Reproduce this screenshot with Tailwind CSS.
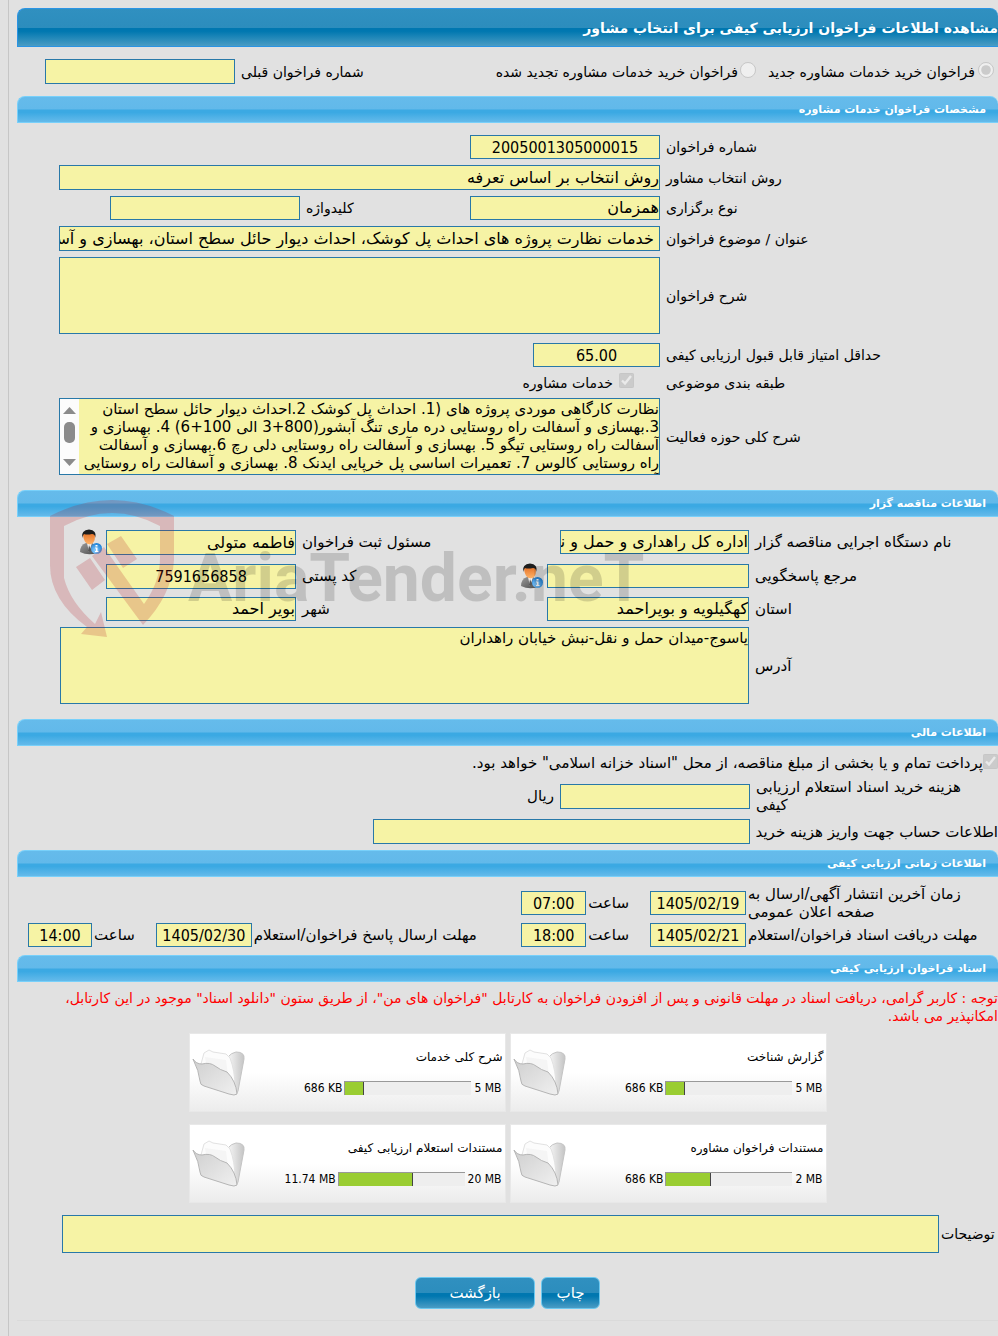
<!DOCTYPE html>
<html lang="fa" dir="rtl">
<head>
  <meta charset="UTF-8" />
  <title>مشاهده اطلاعات فراخوان ارزیابی کیفی</title>
  <meta name="viewport" content="width=device-width, initial-scale=1.0" />
  <script src="https://cdn.jsdelivr.net/npm/@tailwindcss/browser@4"></script>
  <style>
    body {
      font-family: 'DejaVu Sans', sans-serif;
    }
    .num {
      font-family: 'DejaVu Sans Condensed', sans-serif;
    }
    .title-bar {
      background: linear-gradient(#3090c0 0%, #2c8dbd 50%, #0077b0 51%, #0077b0 60%, #4a9cc4 100%);
    }
    .section-bar {
      background: linear-gradient(#65bbeb 0%, #62b9ea 48%, #3ba9e3 52%, #3ba9e3 62%, #64baea 100%);
    }
  </style>
</head>
<body class="bg-[#e1e1e1] text-black text-[15px] leading-[18px] overflow-x-hidden">
  <!-- Shared icons -->
  <svg class="absolute size-0">
    <defs>
      <linearGradient id="suit" x1="0" y1="0" x2="1" y2="1"><stop offset="0" stop-color="#9a9a9a" /><stop offset="1" stop-color="#4a4a4a" /></linearGradient>
      <linearGradient id="face" x1="0" y1="0" x2="0" y2="1"><stop offset="0" stop-color="#e0661c" /><stop offset="1" stop-color="#ffb469" /></linearGradient>
      <radialGradient id="info" cx="0.4" cy="0.7" r="0.7"><stop offset="0" stop-color="#8fd0ff" /><stop offset="1" stop-color="#1b7fd6" /></radialGradient>
      <linearGradient id="front" x1="0" y1="0" x2="1" y2="1"><stop offset="0" stop-color="#cfcfcf" /><stop offset="1" stop-color="#f0f0f0" /></linearGradient>
      <linearGradient id="back" x1="0" y1="0" x2="1" y2="0"><stop offset="0" stop-color="#f7f7f7" /><stop offset="1" stop-color="#c4c4c4" /></linearGradient>
    </defs>
    <symbol id="icon-user" viewBox="0 0 24 26">
      <path d="M1 23Q1 16 7 14L13 14Q18 16 18 24Q9 27 1 23Z" fill="url(#suit)" />
      <path d="M8 14L10 23L13 14Z" fill="#f4f4f4" />
      <path d="M10 16L9 22L11 23L12 21Z" fill="#555" />
      <path d="M4 6Q4 2 10 2Q16 2 16 7Q16 15 10.500 15.500Q5 15 4 6Z" fill="url(#face)" />
      <path d="M3 9Q2 1 10 0.500Q18 1 16.500 9Q16 5 13 5Q8 6 5 5Q4 6 3 9Z" fill="#1d1d1d" />
      <circle cx="17.500" cy="19.500" r="5.500" fill="url(#info)" />
      <path d="M16.500 16H18.500V17.500H16.500ZM16 18.500H18.500V22H19.500V23H16V22H17V19.500H16Z" fill="#fff" />
    </symbol>
    <symbol id="icon-folder" viewBox="0 0 54 48">
      <path d="M36 8Q39 4 44 3Q53 3 52 10L46 42Q45 46 42 45Z" fill="url(#back)" stroke="#c4c4c4" />
      <path d="M9 15L12 4L17 1L21 3L34 5L38 9Q43 22 43 38L12 28Z" fill="#fcfcfc" stroke="#e2e2e2" />
      <path d="M13 8L34 11L37 34L16 26Z" fill="#f5f5f5" />
      <path d="M1 10Q4 15 10 15Q18 13 23 17Q28 21 35 23Q44 32 45 45Q43 47 37 45L12 37Q8 36 8 32Q7 22 1 10Z" fill="url(#front)" stroke="#b5b5b5" />
    </symbol>
  </svg>

  <div class="relative ml-2 pl-2 pt-2 min-h-screen border-l border-[#c6c6c6]">
    <header class="title-bar h-[39px] flex items-center rounded-t-lg border border-[#2a94e4] border-r-0">
      <h1 class="text-sm font-bold text-white">مشاهده اطلاعات فراخوان ارزیابی کیفی برای انتخاب مشاور</h1>
    </header>

    <div class="flex items-center mt-3 mb-3 pr-1 text-sm leading-[18px]">
      <input type="radio" id="call-new" name="call-type" checked disabled class="size-4 mb-1" />
      <label for="call-new" class="mr-[3px] ml-3">فراخوان خرید خدمات مشاوره جدید</label>
      <input type="radio" id="call-renewed" name="call-type" disabled class="size-4 mb-1" />
      <label for="call-renewed" class="mr-[2px]">فراخوان خرید خدمات مشاوره تجدید شده</label>
      <label for="prev-number" class="mr-auto ml-[6px]">شماره فراخوان قبلی</label>
      <input id="prev-number" readonly class="w-[190px] h-[25px] ml-7 bg-[#f6f3a5] border border-[#2878a8]" />
    </div>

    <!-- Call details -->
    <h2 class="section-bar h-[27px] flex items-center pr-3 text-[11px] font-bold text-white rounded-t-lg border border-[#78d0fa] border-r-0">مشخصات فراخوان خدمات مشاوره</h2>
    <div class="pt-3 pb-[15px] pl-[42px] flex flex-col gap-[6px] text-sm leading-[18px]">
      <div class="flex items-center gap-[6px]">
        <label for="call-number" class="w-[332px] shrink-0 text-left">شماره فراخوان</label>
        <input id="call-number" readonly value="2005001305000015" class="num w-[190px] h-6 pt-px text-base text-center bg-[#f6f3a5] border border-[#2878a8]" />
      </div>
      <div class="flex items-center gap-[6px]">
        <label for="method" class="w-[332px] shrink-0 text-left">روش انتخاب مشاور</label>
        <input id="method" readonly value="روش انتخاب بر اساس تعرفه" class="flex-1 min-w-0 h-[25px] text-base bg-[#f6f3a5] border border-[#2878a8]" />
      </div>
      <div class="flex items-center gap-[6px]">
        <label for="holding" class="w-[332px] shrink-0 text-left">نوع برگزاری</label>
        <input id="holding" readonly value="همزمان" class="w-[190px] h-6 text-base bg-[#f6f3a5] border border-[#2878a8]" />
        <label for="keyword" class="mr-auto">کلیدواژه</label>
        <input id="keyword" readonly class="w-[190px] h-6 ml-[51px] text-base bg-[#f6f3a5] border border-[#2878a8]" />
      </div>
      <div class="flex items-center gap-[6px]">
        <label for="subject" class="w-[332px] shrink-0 text-left">عنوان / موضوع فراخوان</label>
        <input id="subject" readonly value=" خدمات نظارت پروژه های احداث پل کوشک، احداث دیوار حائل سطح استان، بهسازی و آسفالت راه روستایی" class="flex-1 min-w-0 h-[25px] text-base bg-[#f6f3a5] border border-[#2878a8]" />
      </div>
      <div class="flex items-center gap-[6px]">
        <label for="description" class="w-[332px] shrink-0 text-left">شرح فراخوان</label>
        <textarea id="description" readonly class="flex-1 min-w-0 h-[77px] resize-none bg-[#f6f3a5] border border-[#2878a8]"></textarea>
      </div>
      <div class="flex items-center gap-[6px] mt-[3px]">
        <label for="min-score" class="w-[332px] shrink-0 text-left">حداقل امتیاز قابل قبول ارزیابی کیفی</label>
        <input id="min-score" readonly value="65.00" class="num w-[127px] h-6 pt-px text-base text-center bg-[#f6f3a5] border border-[#2878a8]" />
      </div>
      <div class="flex items-center gap-[6px] h-[19px]">
        <span class="w-[332px] shrink-0 text-left">طبقه بندی موضوعی</span>
        <input type="checkbox" id="consulting" checked disabled class="size-[15px] mr-[26px] mb-1" />
        <label for="consulting">خدمات مشاوره</label>
      </div>
      <div class="flex items-center gap-[6px]">
        <label for="scope" class="w-[332px] shrink-0 text-left">شرح کلی حوزه فعالیت</label>
        <div class="relative flex-1 min-w-0 h-[77px]">
          <textarea id="scope" readonly class="block w-full h-full pt-px pl-5 text-[15px] leading-[18px] resize-none overflow-hidden bg-[#f6f3a5] border border-[#2878a8]">نظارت کارگاهی موردی پروژه های (1. احداث پل کوشک 2.احداث دیوار حائل سطح استان
3.بهسازی و آسفالت راه روستایی دره ماری تنگ آبشور(800+3 الی 100+6) 4. بهسازی و
آسفالت راه روستایی تیگو 5. بهسازی و آسفالت راه روستایی دلی رچ 6.بهسازی و آسفالت
راه روستایی کالوس 7. تعمیرات اساسی پل خرپایی ایدنک 8. بهسازی و آسفالت راه روستایی
آسفالت</textarea>
          <svg class="absolute left-px top-px bg-[#fcfcfc]" width="19" height="75" viewBox="0 0 19 75" fill="#8b8b8b">
            <path d="M3 15L9.500 8L16 15Z" />
            <rect x="4" y="23" width="11" height="21" rx="5" />
            <path d="M3 60L9.500 67L16 60Z" />
          </svg>
        </div>
      </div>
    </div>

    <!-- Tender holder -->
    <h2 class="section-bar h-[27px] flex items-center pr-3 text-[11px] font-bold text-white rounded-t-lg border border-[#78d0fa] border-r-0">اطلاعات مناقصه گزار</h2>
    <div class="pt-3 pb-[15px] pl-[43px]">
      <div class="flex items-center gap-[6px] h-[26px]">
        <label for="agency" class="w-[243px] shrink-0 text-left">نام دستگاه اجرایی مناقصه گزار</label>
        <input id="agency" readonly value="اداره کل راهداری و حمل و نقل جاده ای" class="w-[189px] h-6 text-base bg-[#f6f3a5] border border-[#2878a8]" />
        <label for="registrar" class="mr-auto">مسئول ثبت فراخوان</label>
        <div class="flex items-center gap-[3px] ml-[19px]">
          <input id="registrar" readonly value="فاطمه متولی" class="w-[190px] h-[25px] text-base bg-[#f6f3a5] border border-[#2878a8]" />
          <svg class="w-6 h-[26px]"><use href="#icon-user" /></svg>
        </div>
      </div>
      <div class="flex items-center gap-[6px] h-[26px] mt-2">
        <label for="respondent" class="w-[243px] shrink-0 text-left">مرجع پاسخگویی</label>
        <div class="flex items-center gap-[3px]">
          <input id="respondent" readonly class="w-[202px] h-6 text-base bg-[#f6f3a5] border border-[#2878a8]" />
          <svg class="w-6 h-[26px]"><use href="#icon-user" /></svg>
        </div>
        <label for="postal" class="mr-auto">کد پستی</label>
        <input id="postal" readonly value="7591656858" class="num w-[190px] h-[25px] pt-px ml-[46px] text-base text-center bg-[#f6f3a5] border border-[#2878a8]" />
      </div>
      <div class="flex items-center gap-[6px] h-6 mt-2">
        <label for="province" class="w-[243px] shrink-0 text-left">استان</label>
        <input id="province" readonly value="کهگیلویه و بویراحمد" class="w-[202px] h-6 text-base bg-[#f6f3a5] border border-[#2878a8]" />
        <label for="city" class="mr-auto">شهر</label>
        <input id="city" readonly value="بویر احمد" class="w-[190px] h-6 ml-[46px] text-base bg-[#f6f3a5] border border-[#2878a8]" />
      </div>
      <div class="flex items-center gap-[6px] mt-[6px]">
        <label for="address" class="w-[243px] shrink-0 text-left">آدرس</label>
        <textarea id="address" readonly class="flex-1 min-w-0 h-[77px] pt-px resize-none bg-[#f6f3a5] border border-[#2878a8]">یاسوج-میدان حمل و نقل-نبش خیابان راهداران</textarea>
      </div>
    </div>

    <!-- Financial -->
    <h2 class="section-bar h-[27px] flex items-center pr-3 text-[11px] font-bold text-white rounded-t-lg border border-[#78d0fa] border-r-0">اطلاعات مالی</h2>
    <div class="pt-2 pb-[6px]">
      <div class="flex items-center h-[18px]">
        <input type="checkbox" id="treasury" checked disabled class="size-[15px] mb-1" />
        <label for="treasury">پرداخت تمام و یا بخشی از مبلغ مناقصه، از محل "اسناد خزانه اسلامی" خواهد بود.</label>
      </div>
      <div class="flex items-center gap-[6px] mt-[6px] h-9">
        <label for="doc-cost" class="w-[242px] shrink-0 text-left">هزینه خرید اسناد استعلام ارزیابی<br>کیفی</label>
        <input id="doc-cost" readonly class="w-[190px] h-[25px] text-base bg-[#f6f3a5] border border-[#2878a8]" />
        <span>ریال</span>
      </div>
      <div class="flex items-center gap-[6px] mt-[5px]">
        <label for="account" class="w-[242px] shrink-0 text-left whitespace-nowrap">اطلاعات حساب جهت واریز هزینه خرید</label>
        <input id="account" readonly class="w-[377px] h-[25px] text-base bg-[#f6f3a5] border border-[#2878a8]" />
      </div>
    </div>

    <!-- Schedule -->
    <h2 class="section-bar h-[27px] flex items-center pr-3 text-[11px] font-bold text-white rounded-t-lg border border-[#78d0fa] border-r-0">اطلاعات زمانی ارزیابی کیفی</h2>
    <div class="pt-2 pb-2 pl-[11px]">
      <div class="flex items-center gap-[2px] h-9">
        <label for="publish-date" class="w-[250px] shrink-0 text-left">زمان آخرین انتشار آگهی/ارسال به<br>صفحه اعلان عمومی</label>
        <input id="publish-date" readonly value="1405/02/19" class="num w-[96px] h-6 pt-px text-base text-center bg-[#f6f3a5] border border-[#2878a8]" />
        <label for="publish-time" class="mr-[19px]">ساعت</label>
        <input id="publish-time" readonly value="07:00" class="num w-[65px] h-6 pt-px text-base text-center bg-[#f6f3a5] border border-[#2878a8]" />
      </div>
      <div class="flex items-center gap-[2px] mt-[2px]">
        <label for="receive-date" class="w-[250px] shrink-0 text-left">مهلت دریافت اسناد فراخوان/استعلام</label>
        <input id="receive-date" readonly value="1405/02/21" class="num w-[96px] h-6 pt-px text-base text-center bg-[#f6f3a5] border border-[#2878a8]" />
        <label for="receive-time" class="mr-[19px]">ساعت</label>
        <input id="receive-time" readonly value="18:00" class="num w-[65px] h-6 pt-px text-base text-center bg-[#f6f3a5] border border-[#2878a8]" />
        <label for="reply-date" class="mr-auto">مهلت ارسال پاسخ فراخوان/استعلام</label>
        <input id="reply-date" readonly value="1405/02/30" class="num w-[96px] h-6 pt-px text-base text-center bg-[#f6f3a5] border border-[#2878a8]" />
        <label for="reply-time" class="mr-[19px]">ساعت</label>
        <input id="reply-time" readonly value="14:00" class="num w-[64px] h-6 pt-px text-base text-center bg-[#f6f3a5] border border-[#2878a8]" />
      </div>
    </div>

    <!-- Documents -->
    <h2 class="section-bar h-[27px] flex items-center pr-3 text-[11px] font-bold text-white rounded-t-lg border border-[#78d0fa] border-r-0">اسناد فراخوان ارزیابی کیفی</h2>
    <p class="mt-[7px] text-sm leading-[18px] text-[#ff0000]">توجه : کاربر گرامی، دریافت اسناد در مهلت قانونی و پس از افزودن فراخوان به کارتابل "فراخوان های من"، از طریق ستون "دانلود اسناد" موجود در این کارتابل،<br>امکانپذیر می باشد.</p>

    <div class="grid grid-cols-[317px_317px] justify-center gap-x-1 gap-y-3 mt-2 text-xs leading-4">
      <div class="h-[79px] bg-linear-to-b from-white from-50% to-[#ececec] border border-[#e8e8e8] pt-[15px] pr-[2px] pl-[2px] flex justify-between">
        <div>
          <p>گزارش شناخت</p>
          <div class="num flex items-center gap-[2px] mt-[15px] pr-px">
            <span dir="ltr" class="ml-px">5 MB</span>
            <div dir="ltr" class="w-[127px] h-[14px] bg-[#eee] border-t border-l border-[#999]"><div class="h-full bg-[#9acd32] border-r border-[#444]" style="width:15%"></div></div>
            <span dir="ltr">686 KB</span>
          </div>
        </div>
        <svg class="w-[54px] h-12"><use href="#icon-folder" /></svg>
      </div>
      <div class="h-[79px] bg-linear-to-b from-white from-50% to-[#ececec] border border-[#e8e8e8] pt-[15px] pr-[2px] pl-[2px] flex justify-between">
        <div>
          <p>شرح کلی خدمات</p>
          <div class="num flex items-center gap-[2px] mt-[15px] pr-px">
            <span dir="ltr" class="ml-px">5 MB</span>
            <div dir="ltr" class="w-[127px] h-[14px] bg-[#eee] border-t border-l border-[#999]"><div class="h-full bg-[#9acd32] border-r border-[#444]" style="width:15%"></div></div>
            <span dir="ltr">686 KB</span>
          </div>
        </div>
        <svg class="w-[54px] h-12"><use href="#icon-folder" /></svg>
      </div>
      <div class="h-[79px] bg-linear-to-b from-white from-50% to-[#ececec] border border-[#e8e8e8] pt-[15px] pr-[2px] pl-[2px] flex justify-between">
        <div>
          <p>مستندات فراخوان مشاوره</p>
          <div class="num flex items-center gap-[2px] mt-[15px] pr-px">
            <span dir="ltr" class="ml-px">2 MB</span>
            <div dir="ltr" class="w-[127px] h-[14px] bg-[#eee] border-t border-l border-[#999]"><div class="h-full bg-[#9acd32] border-r border-[#444]" style="width:35%"></div></div>
            <span dir="ltr">686 KB</span>
          </div>
        </div>
        <svg class="w-[54px] h-12"><use href="#icon-folder" /></svg>
      </div>
      <div class="h-[79px] bg-linear-to-b from-white from-50% to-[#ececec] border border-[#e8e8e8] pt-[15px] pr-[2px] pl-[2px] flex justify-between">
        <div>
          <p>مستندات استعلام ارزیابی کیفی</p>
          <div class="num flex items-center gap-[2px] mt-[15px] pr-px">
            <span dir="ltr" class="ml-px">20 MB</span>
            <div dir="ltr" class="w-[127px] h-[14px] bg-[#eee] border-t border-l border-[#999]"><div class="h-full bg-[#9acd32] border-r border-[#444]" style="width:59%"></div></div>
            <span dir="ltr">11.74 MB</span>
          </div>
        </div>
        <svg class="w-[54px] h-12"><use href="#icon-folder" /></svg>
      </div>
    </div>

    <div class="flex items-center gap-[2px] mt-3 pl-[45px]">
      <label for="notes" class="w-[57px] shrink-0 text-left text-sm">توضیحات</label>
      <textarea id="notes" readonly class="flex-1 min-w-0 h-[38px] resize-none bg-[#f6f3a5] border border-[#2878a8]"></textarea>
    </div>

    <div class="flex justify-center gap-[6px] mt-6 pb-[11px] border-b border-[#dadada]">
      <button type="button" class="title-bar w-[59px] h-8 rounded-md border border-[#6cc8f0] text-white">چاپ</button>
      <button type="button" class="title-bar w-[120px] h-8 rounded-md border border-[#6cc8f0] text-white">بازگشت</button>
    </div>

    <!-- Watermark -->
    <svg class="absolute left-[41px] top-[499px] pointer-events-none" width="604" height="140" viewBox="50 499 604 140" direction="ltr">
      <path fill="#b4141e" fill-opacity="0.2" d="M50 516Q112 484 174 516L174 560Q172 595 143 625L92 556L104 547L120 570L144 604Q160 582 160 558L160 526Q112 500 64 526L64 578Q70 602 95 624L101 612L107 637L81 634L87 627Q50 600 50 565ZM76 567L90 558L105 580L92 590ZM107 544L121 536L137 559L123 568Z" />
      <text x="188" y="601" font-family="Roboto, sans-serif" font-weight="700" font-size="66" fill="#000" fill-opacity="0.15">AriaTender.neT</text>
    </svg>
  </div>
</body>
</html>
